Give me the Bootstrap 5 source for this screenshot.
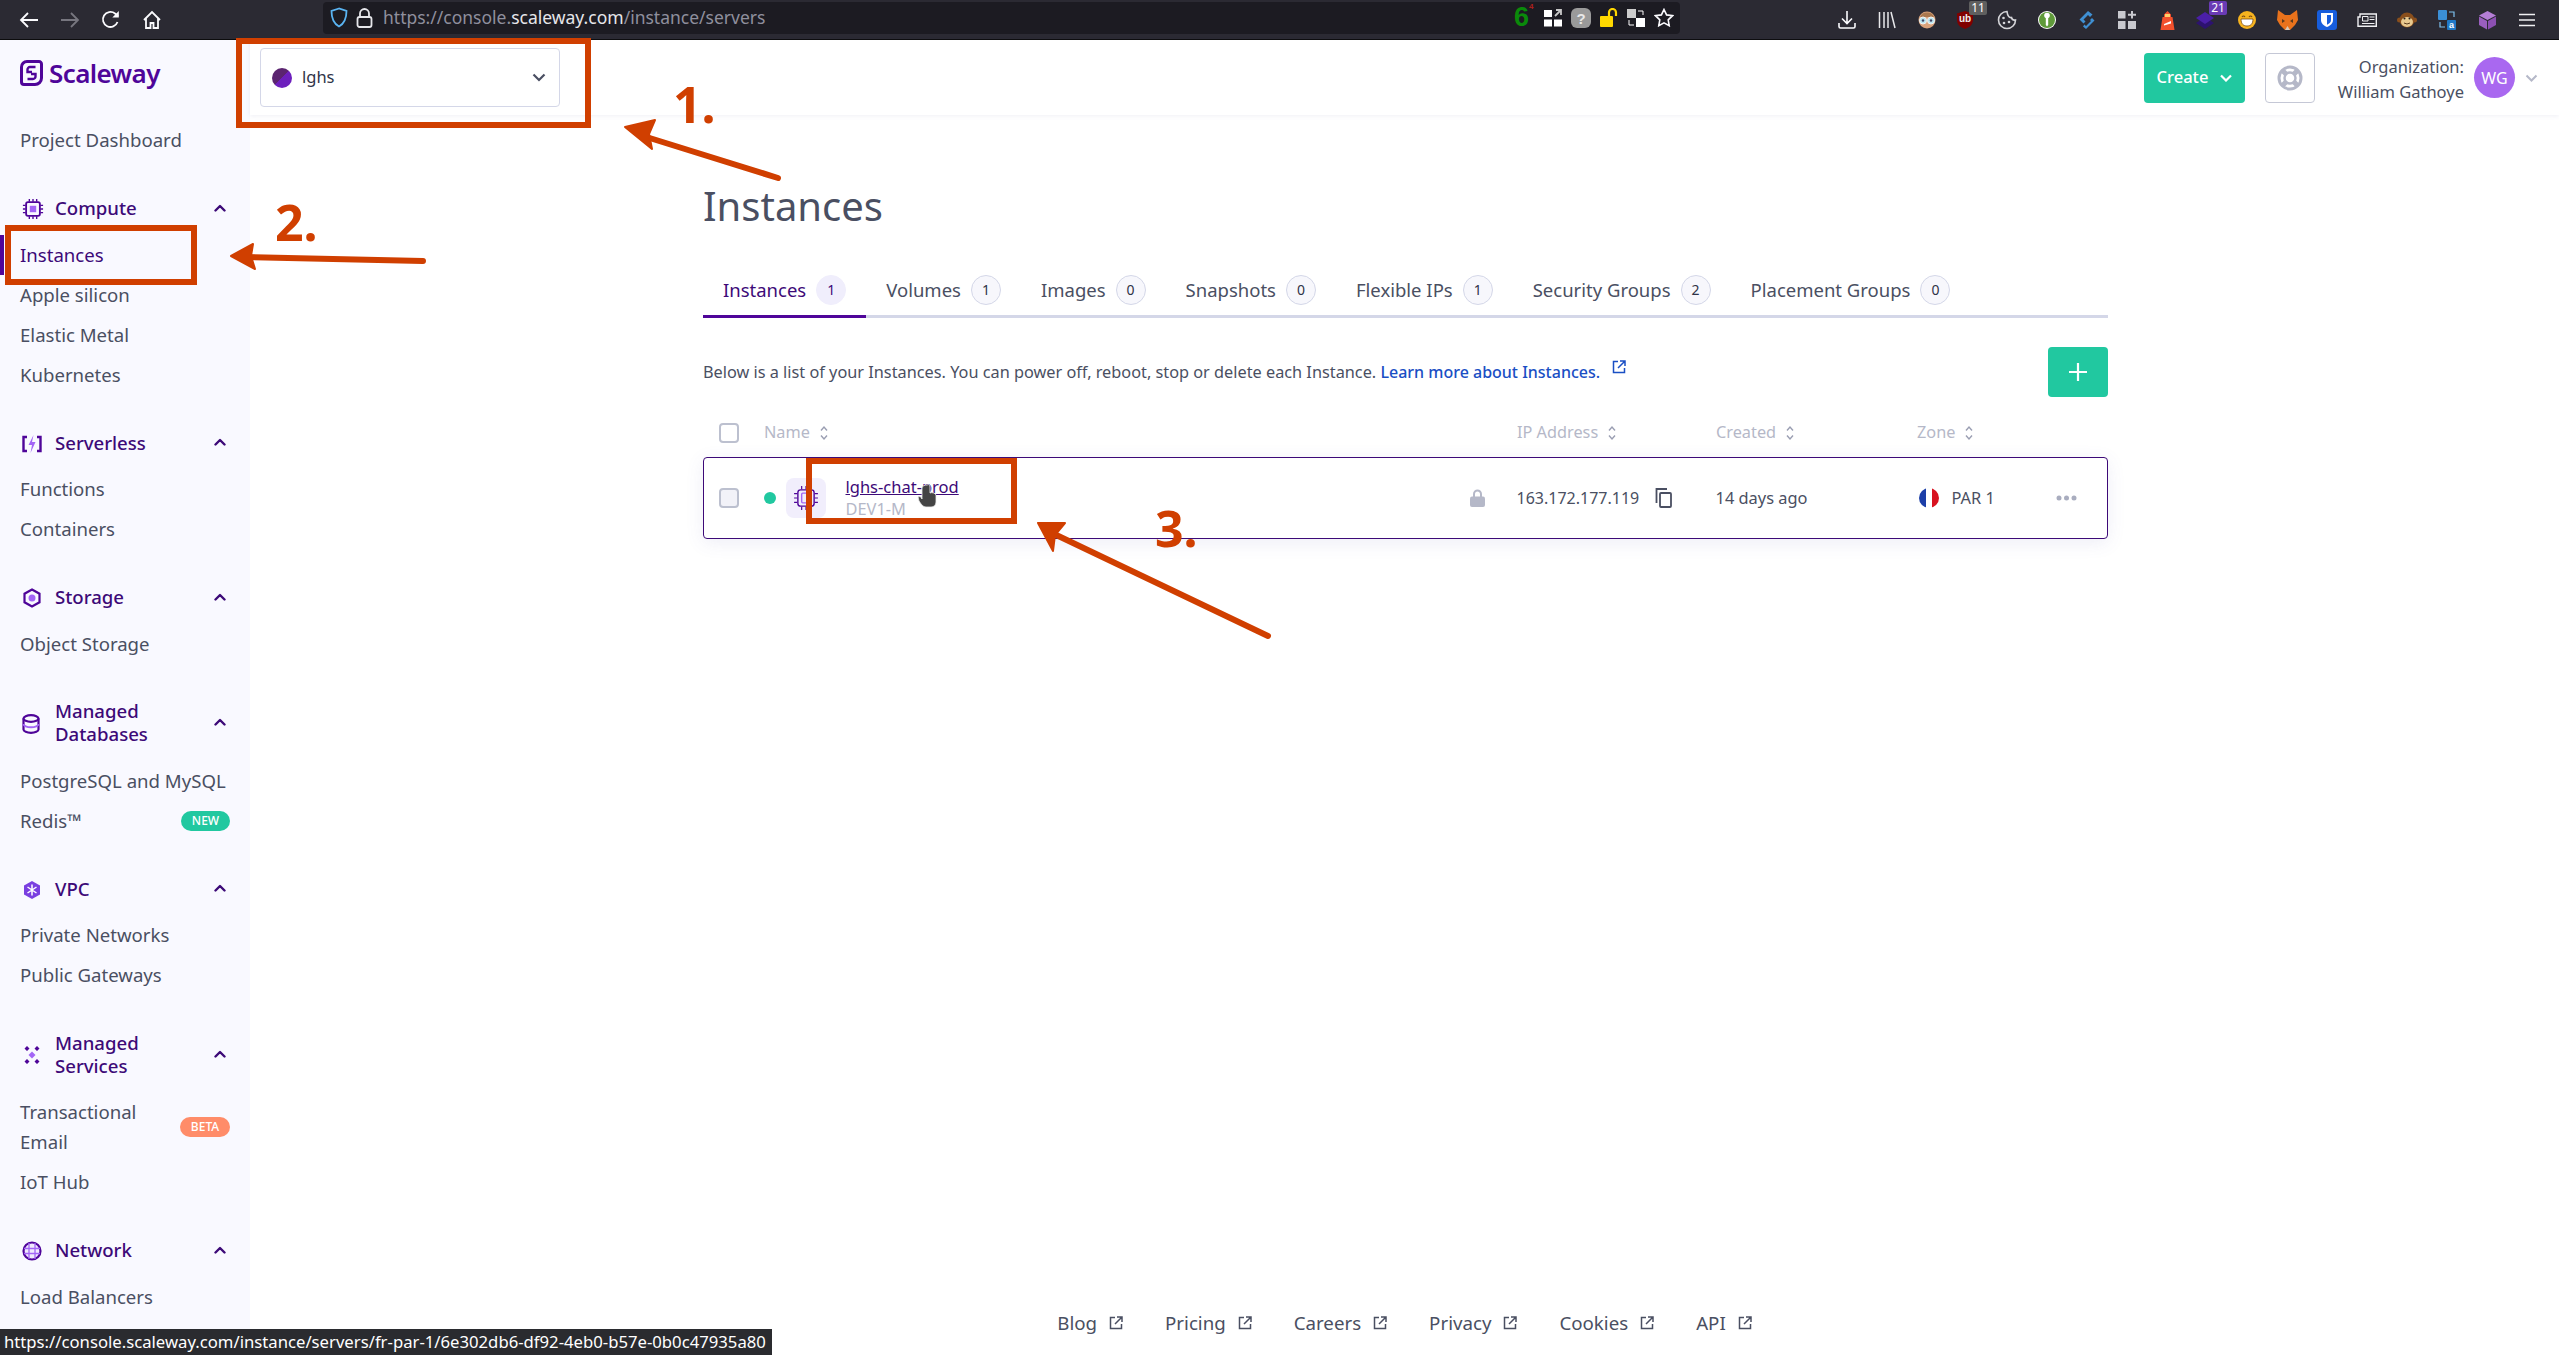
<!DOCTYPE html>
<html lang="en">
<head>
  <meta charset="UTF-8">
  <meta name="viewport" content="width=device-width,initial-scale=1">
  <title>Instances - Scaleway</title>
  <link href="https://cdn.jsdelivr.net/npm/bootstrap@5.3.2/dist/css/bootstrap.min.css" rel="stylesheet">
  <style>
    body {
      height: 100vh;
      overflow: hidden;
      position: relative;
      font-family: "Noto Sans", sans-serif;
      color: #4a4f62;
      background: #fff;
    }
    /* browser chrome */
    .brow-bar { height: 40px; background: #2b2a33; border-bottom: 1px solid #0c0c0d; padding-left: 8px; }
    .brow-btn { width: 41px; height: 39px; }
    .url-box { margin: 1px 0 5px 151px; width: 1357px; height: 32px; background: #1c1b22; border-radius: 4px; padding-left: 7px; }
    .url-txt { font-size: 17.5px; color: #8f8f9d; margin-left: 10px; white-space: nowrap; }
    .url-txt b { font-weight: 400; color: #e6e6ea; }
    .url-end { gap: 9px; padding-right: 6px; }
    .blk-count { color: #0a8a0a; font: 700 27px/1 "Liberation Sans", sans-serif; width: 16px; position: relative; left: 3px; }
    .blk-count sup { position: absolute; left: 15px; top: 3px; color: #b0201c; font-size: 8px; }
    .tool-strip { margin-left: 147px; }
    .tool-slot { width: 40px; height: 39px; position: relative; }
    .tool-badge { position: absolute; top: 1px; left: 22px; width: 18px; height: 14px; font: 12px/14px "Noto Sans", sans-serif; text-align: center; color: #fff; border-radius: 2px; }
    /* sidebar */
    .side-nav { width: 250px; flex: none; background: #f9f9ff; overflow: hidden; }
    .logo-row { height: 80px; padding: 20px 0 0 20px; gap: 6px; align-items: flex-start; }
    .logo-txt { font-size: 26px; font-weight: 600; line-height: 26px; color: #4f0599; letter-spacing: -.6px; }
    .side-link { height: 40px; padding-left: 20px; padding-right: 20px; font-size: 18.6px; color: #4a4f62; text-decoration: none; white-space: nowrap; }
    .side-link.is-on { color: #3d0a78; box-shadow: inset 4px 0 0 #4f0599; }
    .side-link.tall { height: 70px; line-height: 30px; }
    .side-head { min-height: 40px; margin: 27.5px 0 7px; padding: 0 24px 0 22px; font-size: 18.6px; font-weight: 500; line-height: 23px; color: #3d0a78; }
    .side-head.two-line { min-height: 63px; margin-top: 27px; }
    .side-head .ico { width: 22px; flex: none; margin-right: 11px; }
    .side-head .grow { flex: 1; }
    .tag-pill { font-size: 12px; font-weight: 500; padding: 0; width: 49px; line-height: 20px; }
    .tag-new { background: #21c8a0; }
    .tag-beta { background: #ff8c69; width: 50px; }
    /* top bar */
    .top-bar { height: 75px; flex: none; background: #fff; box-shadow: 0 1px 5px rgba(80, 80, 140, .09); padding: 0 21px 0 10px; position: relative; }
    .proj-pick { width: 300px; height: 59px; border: 1px solid #d4d7e8; border-radius: 4px; padding: 0 13px 0 11px; background: #fff; font-size: 16.5px; color: #2f3347; }
    .proj-dot { width: 20px; height: 20px; border-radius: 50%; background: linear-gradient(135deg, #5b2470 50%, #6d1fbd 50%); margin-right: 10px; }
    .new-btn { width: 101px; height: 50px; background: #21c8a0; border: 0; color: #fff; font-size: 16.5px; font-weight: 500; padding: 0; gap: 12px; border-radius: 4px; }
    .help-btn { width: 50px; height: 50px; border: 1px solid #c5c8d6; border-radius: 4px; margin: 0 10px 0 20px; background: #fff; padding: 0; }
    .org-box { font-size: 16.5px; line-height: 25px; text-align: right; width: 139px; padding-top: 2px; white-space: nowrap; }
    .org-ava { width: 41px; height: 41px; background: #a968f0; color: #fff; border-radius: 50%; font-size: 16px; margin: 0 10px 0 10px; }
    /* page */
    .page-body { padding-left: 453px; width: 1858px; }
    .page-title { font-size: 40px; font-weight: 400; line-height: 48px; margin: 67px 0 45px; color: #4a4f62; }
    .tab-line { border-bottom: 3px solid #d4d7e8; height: 43px; flex-wrap: nowrap; }
    .tab-item { height: 43px; padding: 0 20px; gap: 10px; font-size: 18.5px; line-height: 30px; color: #4a4f62; text-decoration: none; white-space: nowrap; }
    .tab-item.is-on { color: #3d0a78; border-bottom: 3px solid #4f0599; }
    .tab-count { width: 30px; height: 30px; border: 1px solid #d4d7e8; background: #f7f7fc; border-radius: 50%; font-size: 14px; color: #2f3347; }
    .is-on .tab-count { background: #f0eefc; border-color: #f0eefc; color: #3d0a78; }
    .intro-row { margin-top: 29px; height: 50px; font-size: 16.3px; }
    .intro-row a { color: #1a4fc4; text-decoration: none; font-weight: 500; font-size: 16px; }
    .add-btn { width: 60px; height: 50px; background: #21c8a0; border: 0; border-radius: 4px; padding: 0; }
    .inst-grid { display: grid; grid-template-columns: 45px 753px 199px 201px 1fr; align-items: center; padding-left: 16px; }
    .inst-head { height: 60px; font-size: 16.3px; color: #b5b8c8; padding-top: 11px; }
    .inst-head span { display: inline-flex; align-items: center; gap: 10px; }
    .tick { width: 20px; height: 20px; margin: 0; border: 2px solid #bcc0cf; border-radius: 2px; background-color: #fff; }
    .inst-row { height: 82px; border: 1.5px solid #3d0a78; border-radius: 4px; box-shadow: 0 4px 18px rgba(90, 90, 180, .1); padding-left: 14.5px; font-size: 16.4px; }
    .inst-row .tick { background-color: #f2f2f8; }
    .ip-txt { font-size: 16px; }
    .on-dot { width: 12px; height: 12px; border-radius: 50%; background: #21c8a0; margin-right: 10px; }
    .chip-tile { width: 40px; height: 40px; background: #f1eefc; border-radius: 8px; margin-right: 20px; }
    .inst-name { color: #3d0a78; text-decoration: underline; line-height: 22px; display: block; font-size: 16.5px; }
    .inst-type { color: #b5b8c8; line-height: 22px; display: block; }
    .round-flag { width: 20px; height: 20px; border-radius: 50%; margin: 0 13px 0 2px; background: linear-gradient(90deg, #1c3fa8 33%, #fff 33%, #fff 66%, #d8121f 66%); }
    .page-foot { height: 64px; flex: none; gap: 42px; font-size: 18.7px; }
    .page-foot span { display: inline-flex; gap: 12px; align-items: center; }
    /* hover url + annotations lie over the page */
    .hover-url { position: absolute; left: 0; bottom: 0; width: 772px; height: 26px; background: #2a2b2f; color: #fff; font-size: 16.7px; line-height: 26px; padding-left: 4px; white-space: nowrap; overflow: hidden; }
    .mark-box { position: absolute; border: 6px solid #d03f00; }
    .mark-one { left: 236px; top: 38px; width: 355px; height: 90px; }
    .mark-two { left: 5px; top: 225px; width: 192px; height: 60px; }
    .mark-three { left: 806px; top: 458px; width: 211px; height: 66px; }
    .mark-num { position: absolute; color: #d03f00; font: 700 50px/50px "Noto Sans", sans-serif; }
    .arrow-layer { position: absolute; inset: 0; pointer-events: none; }
  </style>
</head>
<body class="d-flex flex-column">
  <svg width="0" height="0" class="position-absolute">
    <symbol id="i-up" viewBox="0 0 12 8"><path d="M1.500 6.500 6 2l4.500 4.500" fill="none" stroke="currentColor" stroke-width="2.400" stroke-linecap="round" stroke-linejoin="round"/></symbol>
    <symbol id="i-sort" viewBox="0 0 8 16"><path d="M1 5.500 4 2l3 3.500M1 10.500 4 14l3-3.500" fill="none" stroke="currentColor" stroke-width="1.400"/></symbol>
    <symbol id="i-ext" viewBox="0 0 14 14"><path d="M6 1.500H1.500v11h11V8M8 1h5v5M13 1 6 8" fill="none" stroke="currentColor" stroke-width="1.500"/></symbol>
    <symbol id="i-chip" viewBox="0 0 24 24"><path d="M8 1v3M12 1v3M16 1v3M8 20v3M12 20v3M16 20v3M1 8h3M1 12h3M1 16h3M20 8h3M20 12h3M20 16h3" stroke="currentColor" stroke-width="1.500"/><rect x="4.500" y="4.500" width="15" height="15" rx="2" fill="none" stroke="currentColor" stroke-width="2"/><rect x="8.500" y="8.500" width="7" height="7" fill="#a365f6"/></symbol>
    <symbol id="i-chip-thin" viewBox="0 0 24 24"><path d="M8 1v3M12 1v3M16 1v3M8 20v3M12 20v3M16 20v3M1 8h3M1 12h3M1 16h3M20 8h3M20 12h3M20 16h3" stroke="currentColor" stroke-width="1.100"/><rect x="4.500" y="4.500" width="15" height="15" rx="2.500" fill="none" stroke="currentColor" stroke-width="1.300"/><rect x="8" y="7.500" width="8" height="9" rx="1" fill="none" stroke="#a365f6" stroke-width="1.300"/></symbol>
  </svg>

  <!-- browser toolbar -->
  <div class="brow-bar d-flex align-items-center flex-none">
    <div class="brow-btn d-flex align-items-center justify-content-center">
      <svg width="20" height="18" viewBox="0 0 20 18"><path d="M9 2 2 9l7 7M2 9h17" fill="none" stroke="#fbfbfe" stroke-width="1.800"/></svg>
    </div>
    <div class="brow-btn d-flex align-items-center justify-content-center">
      <svg width="20" height="18" viewBox="0 0 20 18"><path d="m11 2 7 7-7 7M18 9H1" fill="none" stroke="#77767f" stroke-width="1.800"/></svg>
    </div>
    <div class="brow-btn d-flex align-items-center justify-content-center">
      <svg width="20" height="20" viewBox="0 0 20 20"><path d="M16.500 12A7.500 7.500 0 1 1 14 3.500L17 6" fill="none" stroke="#fbfbfe" stroke-width="1.800"/><path d="M17.800 1v6.500h-6.500z" fill="#fbfbfe"/></svg>
    </div>
    <div class="brow-btn d-flex align-items-center justify-content-center">
      <svg width="20" height="20" viewBox="0 0 20 20"><path d="M2 10 10 2l8 8M4 8.500V18h4.500v-5h3v5H16V8.500" fill="none" stroke="#fbfbfe" stroke-width="1.800"/></svg>
    </div>
    <div class="url-box d-flex align-items-center">
      <svg width="18" height="21" viewBox="0 0 18 21"><path d="M9 1.500 1.500 4c0 8 2 12.500 7.500 15.500C14.500 16.500 16.500 12 16.500 4z" fill="none" stroke="#5ab4f2" stroke-width="1.800"/></svg>
      <svg class="ms-2" width="17" height="20" viewBox="0 0 17 20"><path d="M4 9V5.500a4.500 4.500 0 0 1 9 0V9" fill="none" stroke="#e6e6ea" stroke-width="1.800"/><rect x="1.500" y="9" width="14" height="10" rx="2" fill="none" stroke="#e6e6ea" stroke-width="1.800"/></svg>
      <span class="url-txt">https://console.<b>scaleway.com</b>/instance/servers</span>
      <div class="url-end ms-auto d-flex align-items-center">
        <span class="blk-count">6<sup>4</sup></span>
        <svg class="ms-2" width="18" height="18" viewBox="0 0 18 18"><path d="M0 1h8v7H0zM0 10.500h8v7H0zM10 10.500h8v7h-8z" fill="#fff"/><path d="M11 7 17 1M12 1h5v5" stroke="#c8c8c8" stroke-width="1.800" fill="none"/></svg>
        <svg width="20" height="20" viewBox="0 0 20 20"><rect width="20" height="20" rx="6" fill="#9a9a9a"/><text x="10" y="15.500" text-anchor="middle" font-family="Liberation Sans" font-weight="700" font-size="15" fill="#e8e8e8">?</text></svg>
        <svg width="18" height="19" viewBox="0 0 18 19"><rect x="0" y="8" width="13" height="11" rx="1" fill="#ffd800"/><path d="M9 8V4.500a3.500 3.500 0 0 1 7 0V8" fill="none" stroke="#ffd800" stroke-width="2.200"/></svg>
        <svg width="18" height="18" viewBox="0 0 18 18"><rect x="0" y="0" width="9" height="9" fill="#ccc"/><rect x="9" y="9" width="9" height="9" fill="#fff"/><path d="M11 2h5v4M2 11v5h5" fill="none" stroke="#fff"/></svg>
        <svg width="20" height="19" viewBox="0 0 20 19"><path d="m10 1.500 2.600 5.400 5.900.8-4.300 4.100 1 5.900-5.200-2.800-5.200 2.800 1-5.900-4.300-4.100 5.900-.8z" fill="none" stroke="#fbfbfe" stroke-width="1.600"/></svg>
      </div>
    </div>
    <div class="tool-strip d-flex align-items-center">
      <div class="tool-slot d-flex align-items-center justify-content-center"><svg width="18" height="18" viewBox="0 0 18 18"><path d="M9 0v12M4 7.500 9 12.500l5-5M1 12v3.500a1.500 1.500 0 0 0 1.500 1.500h13a1.500 1.500 0 0 0 1.500-1.500V12" fill="none" stroke="#fbfbfe" stroke-width="1.600"/></svg></div>
      <div class="tool-slot d-flex align-items-center justify-content-center"><svg width="18" height="18" viewBox="0 0 18 18"><path d="M1.500 1v16M6 1v16M10 1v16M13 1l4 16" fill="none" stroke="#e8e8ea" stroke-width="1.500"/></svg></div>
      <div class="tool-slot d-flex align-items-center justify-content-center"><svg width="20" height="20" viewBox="0 0 20 20"><circle cx="10" cy="10" r="8.500" fill="#d9a27b"/><path d="M3 7a7.500 7 0 0 1 14 0z" fill="#a9784f"/><circle cx="6" cy="10.500" r="3.500" fill="#b8e4ef" stroke="#f2f2f2"/><circle cx="14" cy="10.500" r="3.500" fill="#b8e4ef" stroke="#f2f2f2"/><circle cx="6" cy="10.500" r="1.200" fill="#446"/><circle cx="14" cy="10.500" r="1.200" fill="#446"/></svg></div>
      <div class="tool-slot d-flex align-items-center justify-content-center"><svg width="18" height="20" viewBox="0 0 18 20" class="me-1"><path d="M9 1 17 3.500V10c0 4.500-3.500 7.500-8 9-4.500-1.500-8-4.500-8-9V3.500z" fill="#800000"/><text x="9" y="12" text-anchor="middle" font-family="Liberation Sans" font-weight="700" font-size="10" fill="#eee">ub</text></svg><span class="tool-badge" style="background:#5f5f5f">11</span></div>
      <div class="tool-slot d-flex align-items-center justify-content-center"><svg width="20" height="20" viewBox="0 0 20 20"><path d="M10 1.500a8.500 8.500 0 1 0 8.500 8.500c-2 .5-3.500-.5-4-2.500-2 .5-4-1-4.500-6z" fill="none" stroke="#d4d4d8" stroke-width="1.600"/><circle cx="6.500" cy="8" r="1.300" fill="#d4d4d8"/><circle cx="7" cy="13" r="1.300" fill="#d4d4d8"/><circle cx="12" cy="12" r="1.300" fill="#d4d4d8"/></svg></div>
      <div class="tool-slot d-flex align-items-center justify-content-center"><svg width="18" height="18" viewBox="0 0 18 18"><circle cx="9" cy="9" r="9" fill="#fff"/><circle cx="9" cy="9" r="8" fill="#5f9a3a"/><circle cx="9" cy="4.500" r="2.800" fill="#fff"/><path d="M7.800 6h2.400v8L9 15.500 7.800 14z" fill="#fff"/></svg></div>
      <div class="tool-slot d-flex align-items-center justify-content-center"><svg width="20" height="20" viewBox="0 0 20 20"><path d="m11 1-8.500 8.500 4 4 2-2-2-2L11 5l2 2 2.500-2.500zM9 19l8.500-8.500L15 8l-2 2 1 1-5 5-1.500-1.500-1.500 2z" fill="#3f8fd2"/></svg></div>
      <div class="tool-slot d-flex align-items-center justify-content-center"><svg width="18" height="18" viewBox="0 0 18 18"><path d="M0 0h7.500v7.500H0zM0 10h7.500v8H0zM10 10h8v8h-8z" fill="#c9c9cf"/><path d="M14 0v7.500M10 3.700h8" stroke="#c9c9cf" stroke-width="2"/></svg></div>
      <div class="tool-slot d-flex align-items-center justify-content-center"><svg width="15" height="20" viewBox="0 0 15 20"><path d="M4 7V4.500L7.500 1 11 4.500V7h1.500l2 13H.500l2-13z" fill="#f2512d"/><rect x="5" y="4" width="5" height="3" fill="#ffcf6b"/><path d="m4 14 7-3v2.500l-7 2z" fill="#fff"/></svg></div>
      <div class="tool-slot d-flex align-items-center justify-content-center"><svg width="20" height="20" viewBox="0 0 20 20" class="me-1"><path d="M10 7 1 13l9 6 9-6z" fill="#2d1270"/><path d="M10 2 1 8l9 6 9-6z" fill="#4b1fa8"/></svg><span class="tool-badge" style="background:#6a3bb5">21</span></div>
      <div class="tool-slot d-flex align-items-center justify-content-center"><svg width="18" height="18" viewBox="0 0 18 18"><circle cx="9" cy="9" r="9" fill="#f6b31f"/><path d="M3 8h12c0 5-2.500 7-6 7s-6-2-6-7z" fill="#fff" stroke="#7a4a12" stroke-width=".8"/><path d="M4 6q1.500-2 3 0M11 6q1.500-2 3 0" fill="none" stroke="#7a4a12" stroke-width="1.200"/></svg></div>
      <div class="tool-slot d-flex align-items-center justify-content-center"><svg width="21" height="20" viewBox="0 0 21 20"><path d="M1 0 8 5h5l7-5 1 10-3 5-5 5H8l-5-5-3-5z" fill="#e9721c"/><path d="M8 20 10.500 16 13 20z" fill="#d8c8b8"/><path d="M5 9 8 11 5 13zM16 9l-3 2 3 2z" fill="#5b3a1c"/></svg></div>
      <div class="tool-slot d-flex align-items-center justify-content-center"><svg width="20" height="20" viewBox="0 0 20 20"><rect width="20" height="20" rx="3" fill="#175ddc"/><path d="M4 3h12v7c0 3.500-2.500 5.500-6 7-3.500-1.500-6-3.500-6-7z" fill="#fff"/><path d="M10 5h4v5c0 2-1.500 3.500-4 4.800z" fill="#175ddc"/></svg></div>
      <div class="tool-slot d-flex align-items-center justify-content-center"><svg width="20" height="14" viewBox="0 0 20 14"><path d="M3 1h16.300v12.300H1V4h2z" fill="none" stroke="#f0f0f2" stroke-width="1.400"/><path d="M5.500 3.500H11V8H5.500z" fill="none" stroke="#f0f0f2"/><path d="M12.500 4h5M12.500 6.500h5M5 10.500h12.500" stroke="#f0f0f2"/></svg></div>
      <div class="tool-slot d-flex align-items-center justify-content-center"><svg width="20" height="20" viewBox="0 0 20 20"><circle cx="10" cy="10" r="7.500" fill="#8a4f1c"/><circle cx="2.500" cy="10" r="2.500" fill="#8a4f1c"/><circle cx="17.500" cy="10" r="2.500" fill="#8a4f1c"/><ellipse cx="10" cy="12" rx="6" ry="5" fill="#e8c98f"/><circle cx="7.500" cy="8.500" r="1" fill="#222"/><circle cx="12.500" cy="8.500" r="1" fill="#222"/><path d="M7 13q3 2 6 0" fill="none" stroke="#5b3a1c"/></svg></div>
      <div class="tool-slot d-flex align-items-center justify-content-center"><svg width="18" height="20" viewBox="0 0 18 20"><rect x="0" y="0" width="9" height="10" rx="1" fill="#3b8fd6"/><rect x="9" y="10" width="9" height="10" rx="1" fill="#1f78c8"/><text x="13.500" y="18" text-anchor="middle" font-family="Liberation Sans" font-weight="700" font-size="9" fill="#fff">a</text><path d="M11 2h5v5M2 12v5h5" fill="none" stroke="#7cc0ee" stroke-width="1.200"/></svg></div>
      <div class="tool-slot d-flex align-items-center justify-content-center"><svg width="19" height="20" viewBox="0 0 19 20"><path d="M9.500 1 18 5.500 9.500 10 1 5.500z" fill="#b57ed6"/><path d="M1 6.500 9 11v8.500L1 15z" fill="#9a5fbf"/><path d="M18 6.500 10 11v8.500l8-4.500z" fill="#8c50b2"/></svg></div>
      <div class="tool-slot d-flex align-items-center justify-content-center"><svg width="16" height="14" viewBox="0 0 16 14"><path d="M0 1.500h16M0 7h16M0 12.500h16" stroke="#f0f0f2" stroke-width="1.700"/></svg></div>
    </div>
  </div>

  <div class="d-flex flex-grow-1" style="min-height:0">
    <!-- sidebar -->
    <aside class="side-nav">
      <div class="logo-row d-flex">
        <svg width="23" height="26" viewBox="0 0 23 26"><path d="M7 1.500h12a2.500 2.500 0 0 1 2.500 2.500v14a6.500 6.500 0 0 1-6.500 6.500H4A2.500 2.500 0 0 1 1.500 22V7A5.500 5.500 0 0 1 7 1.500z" fill="none" stroke="#4f0599" stroke-width="3"/><path d="M15.500 7H10a2.500 2.500 0 0 0-2.500 2.500V12H12M7.500 19H13a2.500 2.500 0 0 0 2.500-2.500V14H11" fill="none" stroke="#4f0599" stroke-width="2.400"/></svg>
        <span class="logo-txt">Scaleway</span>
      </div>
      <a class="side-link d-flex align-items-center" href="#">Project Dashboard</a>

      <div class="side-head d-flex align-items-center">
        <span class="ico"><svg width="22" height="22" viewBox="0 0 24 24" style="color:#4f0599"><use href="#i-chip"/></svg></span>
        <span class="grow">Compute</span>
        <svg width="12" height="8" style="color:#3d0a78"><use href="#i-up"/></svg>
      </div>
      <a class="side-link is-on d-flex align-items-center" href="#">Instances</a>
      <a class="side-link d-flex align-items-center" href="#">Apple silicon</a>
      <a class="side-link d-flex align-items-center" href="#">Elastic Metal</a>
      <a class="side-link d-flex align-items-center" href="#">Kubernetes</a>

      <div class="side-head d-flex align-items-center">
        <span class="ico"><svg width="20" height="18" viewBox="0 0 20 18"><path d="M5 2H1.500v14H5M15 2h3.500v14H15" fill="none" stroke="#4f0599" stroke-width="2.400"/><path d="M11.500 0 6.500 10H10l-1.500 8 5-11H10z" fill="#a365f6"/></svg></span>
        <span class="grow">Serverless</span>
        <svg width="12" height="8" style="color:#3d0a78"><use href="#i-up"/></svg>
      </div>
      <a class="side-link d-flex align-items-center" href="#">Functions</a>
      <a class="side-link d-flex align-items-center" href="#">Containers</a>

      <div class="side-head d-flex align-items-center">
        <span class="ico"><svg width="20" height="20" viewBox="0 0 20 20"><path d="m10 1.500 7.500 4.200v8.600L10 18.500l-7.500-4.200V5.700z" fill="none" stroke="#4f0599" stroke-width="2.200"/><circle cx="10" cy="10" r="3.500" fill="#a365f6"/></svg></span>
        <span class="grow">Storage</span>
        <svg width="12" height="8" style="color:#3d0a78"><use href="#i-up"/></svg>
      </div>
      <a class="side-link d-flex align-items-center" href="#">Object Storage</a>

      <div class="side-head two-line d-flex align-items-center">
        <span class="ico"><svg width="18" height="20" viewBox="0 0 18 20"><ellipse cx="9" cy="4.500" rx="7.500" ry="3.300" fill="none" stroke="#4f0599" stroke-width="2.200"/><path d="M1.500 4.500v11c0 1.800 3.400 3.300 7.500 3.300s7.500-1.500 7.500-3.300v-11" fill="none" stroke="#4f0599" stroke-width="2.200"/><path d="M1.500 10c0 1.800 3.400 3.300 7.500 3.300s7.500-1.500 7.500-3.300" fill="none" stroke="#a365f6" stroke-width="2"/></svg></span>
        <span class="grow">Managed<br>Databases</span>
        <svg width="12" height="8" style="color:#3d0a78"><use href="#i-up"/></svg>
      </div>
      <a class="side-link d-flex align-items-center" href="#">PostgreSQL and MySQL</a>
      <a class="side-link d-flex align-items-center justify-content-between" href="#"><span>Redis™</span><span class="badge rounded-pill tag-pill tag-new">NEW</span></a>

      <div class="side-head d-flex align-items-center">
        <span class="ico"><svg width="20" height="20" viewBox="0 0 20 20"><path d="m10 1 8 4.500v9L10 19l-8-4.500v-9z" fill="#7a3fe0"/><path d="M10 4.500v11M5.500 7l9 6M14.500 7l-9 6" stroke="#fff" stroke-width="1.500"/></svg></span>
        <span class="grow">VPC</span>
        <svg width="12" height="8" style="color:#3d0a78"><use href="#i-up"/></svg>
      </div>
      <a class="side-link d-flex align-items-center" href="#">Private Networks</a>
      <a class="side-link d-flex align-items-center" href="#">Public Gateways</a>

      <div class="side-head two-line d-flex align-items-center">
        <span class="ico"><svg width="20" height="20" viewBox="0 0 20 20"><path d="m5 1 2.500 2.500L5 6 2.500 3.500zM15 1l2.500 2.500L15 6l-2.500-2.500zM5 14l2.500 2.500L5 19l-2.500-2.500zM15 14l2.500 2.500L15 19l-2.500-2.500z" fill="#4f0599"/><path d="m10 6.500 3.500 3.500-3.500 3.500L6.500 10z" fill="#a365f6"/></svg></span>
        <span class="grow">Managed<br>Services</span>
        <svg width="12" height="8" style="color:#3d0a78"><use href="#i-up"/></svg>
      </div>
      <a class="side-link tall d-flex align-items-center justify-content-between" href="#"><span>Transactional<br>Email</span><span class="badge rounded-pill tag-pill tag-beta">BETA</span></a>
      <a class="side-link d-flex align-items-center" href="#">IoT Hub</a>

      <div class="side-head d-flex align-items-center">
        <span class="ico"><svg width="20" height="20" viewBox="0 0 20 20"><circle cx="10" cy="10" r="8.500" fill="#f0eafd" stroke="#4f0599" stroke-width="2.200"/><path d="M2 7.500h16M2 12.500h16M7 2v16M13 2v16" stroke="#a365f6" stroke-width="1.300"/></svg></span>
        <span class="grow">Network</span>
        <svg width="12" height="8" style="color:#3d0a78"><use href="#i-up"/></svg>
      </div>
      <a class="side-link d-flex align-items-center" href="#">Load Balancers</a>
    </aside>

    <div class="d-flex flex-column flex-grow-1" style="min-width:0">
      <header class="top-bar d-flex align-items-center">
        <div class="proj-pick d-flex align-items-center">
          <span class="proj-dot"></span><span>lghs</span>
          <svg class="ms-auto" width="14" height="9" viewBox="0 0 14 9"><path d="m1.500 1.500 5.500 5.500 5.500-5.500" fill="none" stroke="#4a4f62" stroke-width="2.200"/></svg>
        </div>
        <button class="new-btn btn d-flex align-items-center justify-content-center ms-auto">Create
          <svg width="12" height="8" viewBox="0 0 12 8"><path d="M1 1.500 6 6.500l5-5" fill="none" stroke="#fff" stroke-width="2.200"/></svg>
        </button>
        <button class="help-btn btn d-flex align-items-center justify-content-center">
          <svg width="26" height="26" viewBox="0 0 26 26"><path d="m5 5 16 16M21 5 5 21" stroke="#b5b8c8" stroke-width="5"/><circle cx="13" cy="13" r="11" fill="none" stroke="#b5b8c8" stroke-width="3"/><circle cx="13" cy="13" r="5.500" fill="#fff" stroke="#b5b8c8" stroke-width="2.500"/></svg>
        </button>
        <div class="org-box">Organization:<br>William Gathoye</div>
        <span class="org-ava d-flex align-items-center justify-content-center">WG</span>
        <svg width="13" height="8" viewBox="0 0 12 8"><path d="M1 1.500 6 6.500l5-5" fill="none" stroke="#b5b8c8" stroke-width="2"/></svg>
      </header>

      <main class="page-body flex-grow-1">
        <h1 class="page-title">Instances</h1>
        <div class="tab-line nav">
          <a class="tab-item is-on d-flex align-items-start" href="#">Instances <span class="tab-count d-flex align-items-center justify-content-center">1</span></a>
          <a class="tab-item d-flex align-items-start" href="#">Volumes <span class="tab-count d-flex align-items-center justify-content-center">1</span></a>
          <a class="tab-item d-flex align-items-start" href="#">Images <span class="tab-count d-flex align-items-center justify-content-center">0</span></a>
          <a class="tab-item d-flex align-items-start" href="#">Snapshots <span class="tab-count d-flex align-items-center justify-content-center">0</span></a>
          <a class="tab-item d-flex align-items-start" href="#">Flexible IPs <span class="tab-count d-flex align-items-center justify-content-center">1</span></a>
          <a class="tab-item d-flex align-items-start" href="#">Security Groups <span class="tab-count d-flex align-items-center justify-content-center">2</span></a>
          <a class="tab-item d-flex align-items-start" href="#">Placement Groups <span class="tab-count d-flex align-items-center justify-content-center">0</span></a>
        </div>

        <div class="intro-row d-flex align-items-center justify-content-between">
          <div>Below is a list of your Instances. You can power off, reboot, stop or delete each Instance. <a href="#">Learn more about Instances.</a>
            <svg class="ms-2 align-top" width="14" height="14" style="color:#1a4fc4"><use href="#i-ext"/></svg></div>
          <button class="add-btn btn d-flex align-items-center justify-content-center">
            <svg width="18" height="18" viewBox="0 0 18 18"><path d="M9 0v18M0 9h18" stroke="#fff" stroke-width="2.200"/></svg>
          </button>
        </div>

        <div class="inst-grid inst-head">
          <input class="form-check-input tick" type="checkbox" aria-label="Select all">
          <span>Name <svg width="8" height="16" style="color:#9a9eb2"><use href="#i-sort"/></svg></span>
          <span>IP Address <svg width="8" height="16" style="color:#9a9eb2"><use href="#i-sort"/></svg></span>
          <span>Created <svg width="8" height="16" style="color:#9a9eb2"><use href="#i-sort"/></svg></span>
          <span>Zone <svg width="8" height="16" style="color:#9a9eb2"><use href="#i-sort"/></svg></span>
        </div>

        <div class="inst-grid inst-row">
          <input class="form-check-input tick" type="checkbox" aria-label="Select lghs-chat-prod">
          <div class="d-flex align-items-center">
            <span class="on-dot"></span>
            <span class="chip-tile d-flex align-items-center justify-content-center">
              <svg width="26" height="26" viewBox="0 0 24 24" style="color:#4f0599"><use href="#i-chip-thin"/></svg>
            </span>
            <div>
              <a class="inst-name" href="#">lghs-chat-prod</a>
              <span class="inst-type">DEV1-M</span>
            </div>
            <svg class="ms-auto" style="margin-right:32px" width="15" height="18" viewBox="0 0 15 18"><path d="M4 8V5a3.500 3.500 0 0 1 7 0v3" fill="none" stroke="#b5b8c8" stroke-width="2"/><rect y="7.500" width="15" height="10.500" rx="2" fill="#b5b8c8"/></svg>
          </div>
          <div class="d-flex align-items-center">
            <span class="ip-txt">163.172.177.119</span>
            <svg class="ms-3" width="17" height="20" viewBox="0 0 17 20"><path d="M12 1H1.500v14" fill="none" stroke="#4a4f62" stroke-width="1.800"/><rect x="5" y="5" width="11" height="14" rx="1" fill="none" stroke="#4a4f62" stroke-width="1.800"/></svg>
          </div>
          <div>14 days ago</div>
          <div class="d-flex align-items-center">
            <span class="round-flag"></span><span>PAR 1</span>
            <svg style="margin-left:61px" width="21" height="6" viewBox="0 0 21 6"><circle cx="3" cy="3" r="2.500" fill="#a9adbf"/><circle cx="10.500" cy="3" r="2.500" fill="#a9adbf"/><circle cx="18" cy="3" r="2.500" fill="#a9adbf"/></svg>
          </div>
        </div>
      </main>

      <footer class="page-foot d-flex align-items-center justify-content-center">
        <span>Blog <svg width="14" height="14"><use href="#i-ext"/></svg></span>
        <span>Pricing <svg width="14" height="14"><use href="#i-ext"/></svg></span>
        <span>Careers <svg width="14" height="14"><use href="#i-ext"/></svg></span>
        <span>Privacy <svg width="14" height="14"><use href="#i-ext"/></svg></span>
        <span>Cookies <svg width="14" height="14"><use href="#i-ext"/></svg></span>
        <span>API <svg width="14" height="14"><use href="#i-ext"/></svg></span>
      </footer>
    </div>
  </div>

  <div class="hover-url">https://console.scaleway.com/instance/servers/fr-par-1/6e302db6-df92-4eb0-b57e-0b0c47935a80</div>

  <!-- screenshot annotations -->
  <div class="mark-box mark-one"></div>
  <div class="mark-box mark-two"></div>
  <div class="mark-box mark-three"></div>
  <span class="mark-num" style="left:673px;top:79px">1.</span>
  <span class="mark-num" style="left:275px;top:197px">2.</span>
  <span class="mark-num" style="left:1155px;top:503px">3.</span>
  <svg class="arrow-layer" width="2559" height="1355" viewBox="0 0 2559 1355">
    <g fill="#d03f00" stroke="#d03f00" stroke-linejoin="round">
      <path d="M778 178 640 135" fill="none" stroke-width="6" stroke-linecap="round"/>
      <path d="m625 127 30-7-6 14 3 15z" stroke-width="2"/>
      <path d="M423 261 245 257" fill="none" stroke-width="6" stroke-linecap="round"/>
      <path d="m231 256 22-12-2 12 4 13z" stroke-width="2"/>
      <path d="M1268 636 1050 532" fill="none" stroke-width="6" stroke-linecap="round"/>
      <path d="m1038 523 27 0-10 12-2 16z" stroke-width="2"/>
    </g>
    <path d="M932 487c2-1 3 0 3 2v6c2-1 5 0 6 2v7c0 3-2 5-5 5h-5c-3 0-5-3-7-6l-1-4c2-1 3 0 4 2v-11c0-2 3-3 5-3z" fill="#444" stroke="#eee" stroke-width=".8" transform="translate(-5 -2)"/>
  </svg>

  <script src="https://cdn.jsdelivr.net/npm/bootstrap@5.3.2/dist/js/bootstrap.bundle.min.js"></script>
</body>
</html>
